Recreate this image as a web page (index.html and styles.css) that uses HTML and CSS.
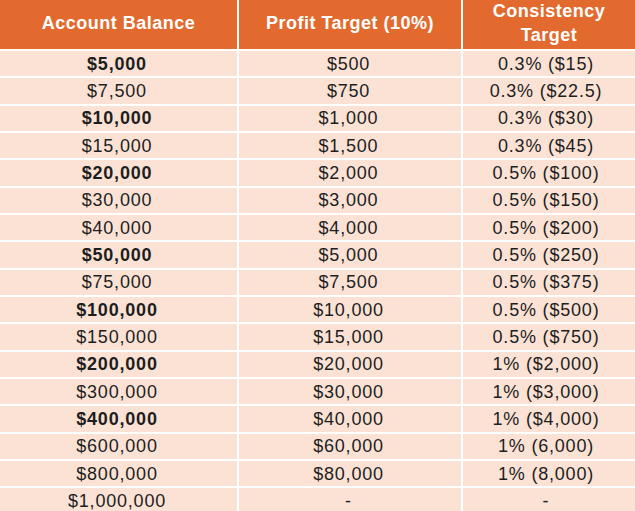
FILE: index.html
```html
<!DOCTYPE html>
<html>
<head>
<meta charset="utf-8">
<link rel="stylesheet" href="styles.css">
</head>
<body>
<div class="table">
  <div class="th">Account Balance</div>
  <div class="th">Profit Target (10%)</div>
  <div class="th">Consistency<br>Target</div>

  <div class="td c1 b">$5,000</div><div class="td c2">$500</div><div class="td c3">0.3% ($15)</div>
  <div class="td c1">$7,500</div><div class="td c2">$750</div><div class="td c3">0.3% ($22.5)</div>
  <div class="td c1 b">$10,000</div><div class="td c2">$1,000</div><div class="td c3">0.3% ($30)</div>
  <div class="td c1">$15,000</div><div class="td c2">$1,500</div><div class="td c3">0.3% ($45)</div>
  <div class="td c1 b">$20,000</div><div class="td c2">$2,000</div><div class="td c3">0.5% ($100)</div>
  <div class="td c1">$30,000</div><div class="td c2">$3,000</div><div class="td c3">0.5% ($150)</div>
  <div class="td c1">$40,000</div><div class="td c2">$4,000</div><div class="td c3">0.5% ($200)</div>
  <div class="td c1 b">$50,000</div><div class="td c2">$5,000</div><div class="td c3">0.5% ($250)</div>
  <div class="td c1">$75,000</div><div class="td c2">$7,500</div><div class="td c3">0.5% ($375)</div>
  <div class="td c1 b">$100,000</div><div class="td c2">$10,000</div><div class="td c3">0.5% ($500)</div>
  <div class="td c1">$150,000</div><div class="td c2">$15,000</div><div class="td c3">0.5% ($750)</div>
  <div class="td c1 b">$200,000</div><div class="td c2">$20,000</div><div class="td c3">1% ($2,000)</div>
  <div class="td c1">$300,000</div><div class="td c2">$30,000</div><div class="td c3">1% ($3,000)</div>
  <div class="td c1 b">$400,000</div><div class="td c2">$40,000</div><div class="td c3">1% ($4,000)</div>
  <div class="td c1">$600,000</div><div class="td c2">$60,000</div><div class="td c3">1% (6,000)</div>
  <div class="td c1">$800,000</div><div class="td c2">$80,000</div><div class="td c3">1% (8,000)</div>
  <div class="td c1">$1,000,000</div><div class="td c2">-</div><div class="td c3">-</div>
</div>
</body>
</html>
```

FILE: styles.css
```css
html, body {
  margin: 0;
  padding: 0;
  background: #ffffff;
}

body {
  width: 635px;
  height: 511px;
  overflow: hidden;
}

.table {
  display: grid;
  grid-template-columns: 237px 222px 1fr;
  grid-template-rows: 49px repeat(17, 25.33px);
  gap: 2px;
  background: #ffffff;
  font-family: "Liberation Sans", Arial, sans-serif;
  font-size: 18px;
}

.th {
  background: #e36a2e;
  color: #ffffff;
  font-weight: bold;
  letter-spacing: 0.5px;
  display: flex;
  align-items: center;
  justify-content: center;
  text-align: center;
  line-height: 24px;
  padding-bottom: 3px;
  box-sizing: border-box;
}

.td {
  background: #fbe2d5;
  color: #1e1e1e;
  letter-spacing: 0.8px;
  display: flex;
  align-items: center;
  justify-content: center;
  line-height: 20px;
  white-space: nowrap;
}

.c1 { padding-right: 3px; }
.c2 { padding-right: 3px; }
.c3 { padding-right: 6px; }

.b { font-weight: bold; }
```
